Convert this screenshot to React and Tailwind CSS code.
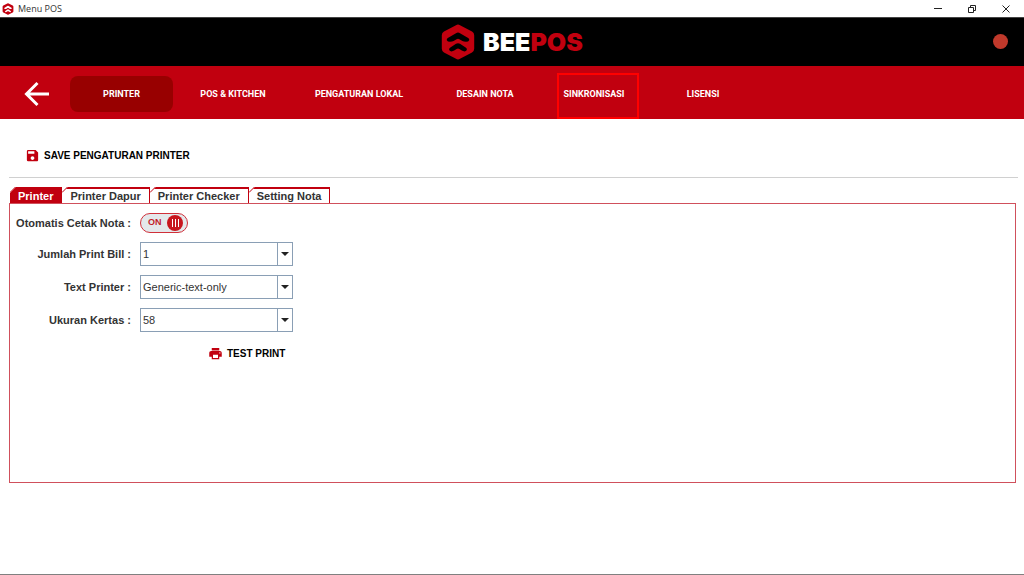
import { useState } from 'react';
import { MdLocalPrintshop, MdSave } from 'react-icons/md';

const menus = [
  { name: 'PRINTER', width: 'w-[103px]' },
  { name: 'POS & KITCHEN', width: 'w-[120px]' },
  { name: 'PENGATURAN LOKAL', width: 'w-[132px]' },
  { name: 'DESAIN NOTA', width: 'w-[120px]' },
  { name: 'SINKRONISASI', width: 'w-[98px]', highlight: true },
  { name: 'LISENSI', width: 'w-[120px]' },
];

const tabs = ['Printer', 'Printer Dapur', 'Printer Checker', 'Setting Nota'];

function HexLogo({ className }) {
  return (
    <svg viewBox="0 0 34 36" className={className} aria-hidden="true">
      <path
        d="M15 1.2Q17 0 19 1.2L31 7.6Q33.2 8.8 33.2 11.2V24.8Q33.2 27.2 31 28.4L19 34.8Q17 36 15 34.8L3 28.4Q.8 27.2 .8 24.8V11.2Q.8 8.8 3 7.6Z"
        fill="#c1000f"
      />
      <path
        d="M5.8 16.2Q5.4 15 6.8 14L15 9.2Q17 8 19 9.2L27.2 14Q28.6 15 28.2 16.2Q27.5 17.8 25 17.8Q22.8 17.8 21.4 17L18.4 15.2Q17 14.4 15.6 15.2L12.6 17Q11.2 17.8 9 17.8Q6.5 17.8 5.8 16.2Z"
        fill="currentColor"
      />
      <path
        d="M8.2 26Q7.8 24.8 9 23.8L15 19.8Q17 18.6 19 19.8L25 23.8Q26.2 24.8 25.8 26Q25.2 27.4 23.4 27.4Q22 27.4 20.8 26.6L18.4 25Q17 24.2 15.6 25L13.2 26.6Q12 27.4 10.6 27.4Q8.8 27.4 8.2 26Z"
        fill="currentColor"
      />
    </svg>
  );
}

function TitleBar() {
  return (
    <div className="flex h-[17px] items-center justify-between bg-white pl-0.5 pr-[13px]">
      <div className="flex items-center gap-1">
        <HexLogo className="h-3 w-3 text-white" />
        <span className="font-['Open_Sans',sans-serif] text-[9px] leading-4 text-[#333]">Menu POS</span>
      </div>
      <div className="flex items-center gap-6 text-[#222]">
        <button type="button" aria-label="Minimize">
          <svg width="10" height="10" viewBox="0 0 10 10" stroke="currentColor">
            <path d="M1 4.5H9" />
          </svg>
        </button>
        <button type="button" aria-label="Restore">
          <svg width="10" height="10" viewBox="0 0 10 10" fill="none" stroke="currentColor">
            <path d="M1.5 3.5H6.5V8.5H1.5ZM3.5 3V1.5H8.5V6.5H7" />
          </svg>
        </button>
        <button type="button" aria-label="Close">
          <svg width="10" height="10" viewBox="0 0 10 10" stroke="currentColor">
            <path d="M1.5 1.5L8.5 8.5M8.5 1.5L1.5 8.5" />
          </svg>
        </button>
      </div>
    </div>
  );
}

function Field({ id, label, value }) {
  return (
    <>
      <label htmlFor={id} className="text-right">
        {label} :
      </label>
      <div className="relative h-6 w-[153px]">
        <select
          id={id}
          defaultValue={value}
          className="h-6 w-full appearance-none border border-[#8a9fb5] bg-white pr-4 pl-0.5 font-normal"
        >
          <option>{value}</option>
        </select>
        <span className="pointer-events-none absolute inset-y-0 right-0 flex w-4 items-center justify-center border border-[#8a9fb5]">
          <svg width="8" height="4" viewBox="0 0 8 4">
            <path d="M0 0H8L4 4Z" fill="#222" />
          </svg>
        </span>
      </div>
    </>
  );
}

function App() {
  const [activeMenu, setActiveMenu] = useState('PRINTER');
  const [activeTab, setActiveTab] = useState('Printer');
  const [autoPrint, setAutoPrint] = useState(true);

  return (
    <div className="flex min-h-screen flex-col border-b border-[#808080] bg-white font-['Liberation_Sans',sans-serif] text-[11px] text-[#333]">
      <TitleBar />

      {/* Header */}
      <header className="relative flex h-[49px] items-center justify-center gap-2 border-t border-[#444] bg-black">
        <HexLogo className="h-9 w-[34px] text-black" />
        <h1 className="font-['Inter',sans-serif] text-[25px] leading-8 font-black text-white">
          BEE<span className="text-[#c1000f]">POS</span>
        </h1>
        <span className="absolute top-4 right-4 size-[15px] rounded-full bg-[#c0392b]" />
      </header>

      {/* Menu */}
      <nav className="flex h-[53px] items-center bg-[#c1000f] pt-0.5 pl-6">
        <button type="button" aria-label="Kembali" className="mr-5">
          <svg width="26" height="26" viewBox="0 0 26 26" fill="none" stroke="white" strokeWidth="3">
            <path d="M25 13H3M13.5 2L2.5 13L13.5 24" />
          </svg>
        </button>
        {menus.map((menu) => (
          <button
            key={menu.name}
            type="button"
            onClick={() => setActiveMenu(menu.name)}
            className={`relative h-9 rounded-lg pt-0.5 font-['Roboto',sans-serif] text-[9px] font-bold text-white ${menu.width} ${
              activeMenu === menu.name ? 'bg-[#980000]' : ''
            }`}
          >
            {menu.name}
            {menu.highlight && (
              <span className="absolute -top-[3px] right-1 -bottom-[7px] left-3 border-2 border-[#ff0000]" />
            )}
          </button>
        ))}
      </nav>

      <main className="flex flex-1 flex-col pr-2 pb-[91px] pl-[9px]">
        <div className="-mr-0.5 flex h-[59px] items-center border-b border-[#d0d0d0] pt-3.5 pl-4">
          <button type="button" className="flex items-center gap-1 text-[10px] font-bold text-black">
            <MdSave className="size-[15px] text-[#c1000f]" />
            SAVE PENGATURAN PRINTER
          </button>
        </div>

        {/* Tab */}
        <div role="tablist" className="mt-[9px] flex pl-px">
          {tabs.map((tab) => (
            <button
              key={tab}
              type="button"
              role="tab"
              aria-selected={activeTab === tab}
              onClick={() => setActiveTab(tab)}
              className={`relative h-4 border-t-2 border-r border-[#c1000f] px-2 leading-[14px] font-bold ${
                activeTab === tab ? 'bg-[#c1000f] text-white' : 'bg-white'
              }`}
            >
              {tab}
              <svg className="absolute -top-0.5 left-0" width="6" height="6" viewBox="0 0 6 6">
                <path d="M0 0H6L0 6Z" fill="white" />
                <path d="M0 5.5L5.5 0" stroke="#c1000f" />
              </svg>
            </button>
          ))}
        </div>

        <section className="flex-1 border border-[#d0505c] pt-[9px]">
          <div className="grid w-max grid-cols-[121px_153px] items-center gap-[9px] font-bold">
            <label htmlFor="otomatis" className="text-right whitespace-nowrap">
              Otomatis Cetak Nota :
            </label>
            <label className="relative flex h-5 w-12 cursor-pointer items-center rounded-full border border-[#d0303a] bg-[#e4e8eb] pl-[7px] text-[9px] text-[#c1202a]">
              <input
                id="otomatis"
                type="checkbox"
                role="switch"
                checked={autoPrint}
                onChange={(e) => setAutoPrint(e.target.checked)}
                className="sr-only"
              />
              {autoPrint ? 'ON' : 'OFF'}
              <span className="absolute top-px right-1 flex size-4 items-center justify-center gap-0.5 rounded-full bg-[#c8161e]">
                <i className="h-2 w-px bg-white" />
                <i className="h-2 w-px bg-white" />
                <i className="h-2 w-px bg-white" />
              </span>
            </label>

            <Field id="jumlah" label="Jumlah Print Bill" value="1" />
            <Field id="printer" label="Text Printer" value="Generic-text-only" />
            <Field id="kertas" label="Ukuran Kertas" value="58" />
          </div>
          <button type="button" className="mt-3.5 ml-[198px] flex items-center gap-1 text-[10px] font-bold text-black">
            <MdLocalPrintshop className="size-[15px] text-[#c1000f]" />
            TEST PRINT
          </button>
        </section>
      </main>
    </div>
  );
}

export default App;
